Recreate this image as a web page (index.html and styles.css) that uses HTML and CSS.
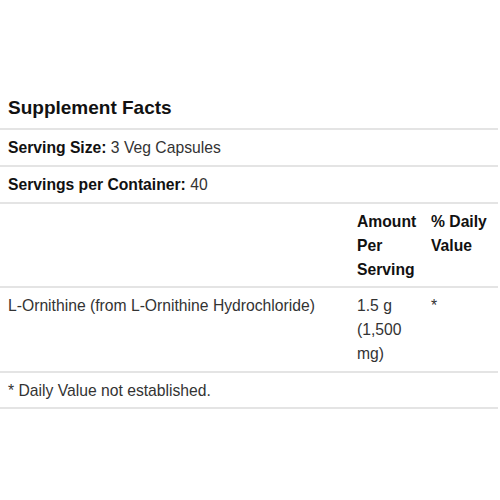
FILE: index.html
```html
<!DOCTYPE html>
<html>
<head>
<meta charset="utf-8">
<link rel="stylesheet" href="styles.css">
</head>
<body>
<div class="facts">
  <h2 class="title">Supplement Facts</h2>
  <table class="tbl">
    <colgroup><col class="c1"><col class="c2"><col class="c3"></colgroup>
    <tr><td colspan="3"><b>Serving Size:</b> 3 Veg Capsules</td></tr>
    <tr><td colspan="3"><b>Servings per Container:</b> 40</td></tr>
    <tr class="head"><td></td><td><b>Amount Per Serving</b></td><td><b>% Daily Value</b></td></tr>
    <tr><td>L-Ornithine (from L-Ornithine Hydrochloride)</td><td>1.5 g (1,500 mg)</td><td>*</td></tr>
    <tr class="note"><td colspan="3">* Daily Value not established.</td></tr>
  </table>
</div>
</body>
</html>
```
FILE: styles.css
```css
html, body { margin: 0; padding: 0; background: #fff; }
body { font-family: "Liberation Sans", Arial, sans-serif; color: #333; }
.facts { padding-top: 94px; width: 498px; }
.title {
  margin: 0;
  padding: 0 8px 7px;
  font-size: 19px;
  line-height: 27px;
  font-weight: bold;
  color: #111;
  border-bottom: 2px solid #e4e4e4;
}
.tbl { width: 100%; border-collapse: collapse; table-layout: fixed; font-size: 15.7px; line-height: 24px; }
.c1 { width: 349px; }
.c2 { width: 74px; }
.c3 { width: 75px; }
.tbl td { padding: 6px 0 5px 8px; vertical-align: top; border-bottom: 2px solid #e4e4e4; }
.tbl .head td, .tbl .note td { padding-bottom: 4px; }
.tbl b { color: #111; }
```
